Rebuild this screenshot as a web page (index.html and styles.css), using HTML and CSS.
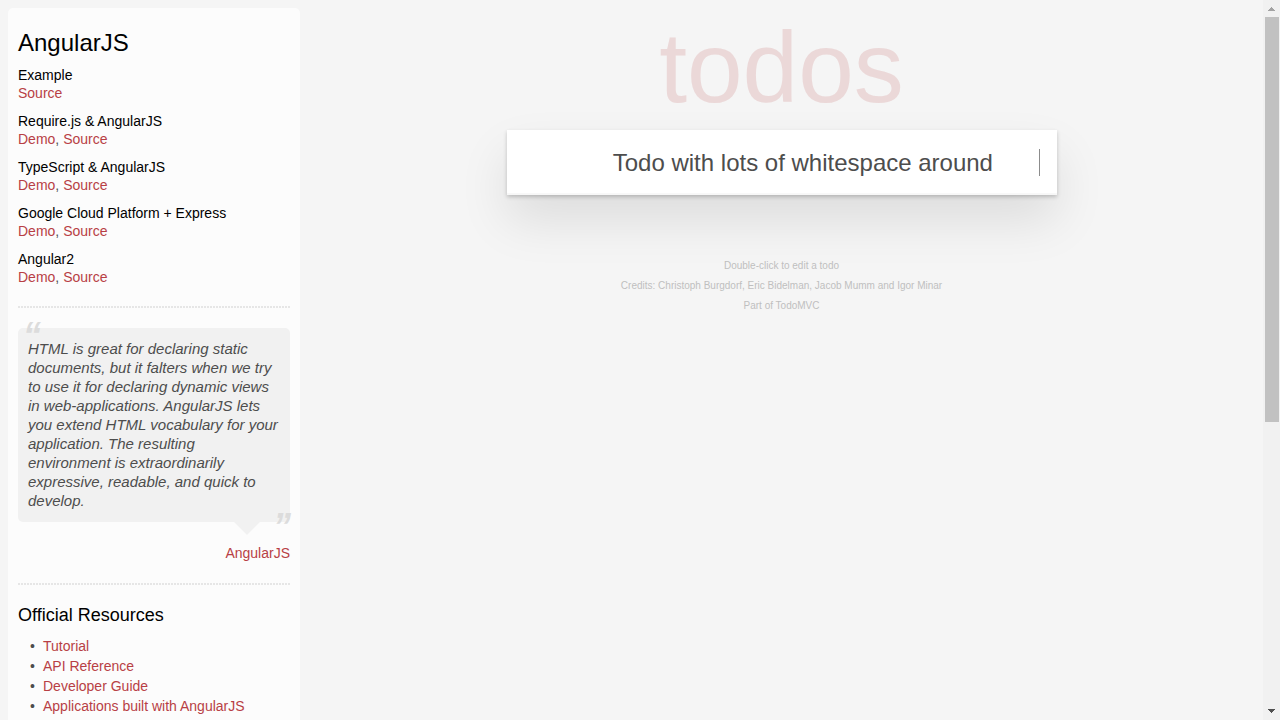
FILE: index.html
```html
<!DOCTYPE html>
<html lang="en">
<head>
<meta charset="utf-8">
<title>AngularJS • TodoMVC</title>
<link rel="stylesheet" href="styles.css">
</head>
<body>
<div class="page">
  <aside class="learn">
    <h3 class="learn-title">AngularJS</h3>
    <section class="source-links">
      <h5>Example</h5>
      <p><a href="#">Source</a></p>
    </section>
    <section class="source-links">
      <h5>Require.js &amp; AngularJS</h5>
      <p><a href="#">Demo</a>, <a href="#">Source</a></p>
    </section>
    <section class="source-links">
      <h5>TypeScript &amp; AngularJS</h5>
      <p><a href="#">Demo</a>, <a href="#">Source</a></p>
    </section>
    <section class="source-links">
      <h5>Google Cloud Platform + Express</h5>
      <p><a href="#">Demo</a>, <a href="#">Source</a></p>
    </section>
    <section class="source-links">
      <h5>Angular2</h5>
      <p><a href="#">Demo</a>, <a href="#">Source</a></p>
    </section>
    <hr>
    <blockquote class="quote">
      <p class="speech-bubble">HTML is great for declaring static documents, but it falters when we try to use it for declaring dynamic views in web-applications. AngularJS lets you extend HTML vocabulary for your application. The resulting environment is extraordinarily expressive, readable, and quick to develop.</p>
      <footer><a href="#">AngularJS</a></footer>
    </blockquote>
    <hr>
    <h4>Official Resources</h4>
    <ul>
      <li><a href="#">Tutorial</a></li>
      <li><a href="#">API Reference</a></li>
      <li><a href="#">Developer Guide</a></li>
      <li><a href="#">Applications built with AngularJS</a></li>
    </ul>
  </aside>
  <main class="content">
    <h1>todos</h1>
    <form class="todo-form">
      <input class="new-todo" type="text" aria-label="What needs to be done?" value="       Todo with lots of whitespace around       ">
      <span class="caret"></span>
    </form>
    <footer class="info">
      <p>Double-click to edit a todo</p>
      <p>Credits: <a href="#">Christoph Burgdorf</a>, <a href="#">Eric Bidelman</a>, <a href="#">Jacob Mumm</a> and <a href="#">Igor Minar</a></p>
      <p>Part of <a href="#">TodoMVC</a></p>
    </footer>
  </main>
  <div class="scrollbar" aria-hidden="true">
    <svg viewBox="0 0 17 17" shape-rendering="crispEdges"><path fill="#a3a3a3" d="M8 7h1v1h1v1h1v1h1v1H5v-1h1V9h1V8h1z"/></svg>
    <div class="track"><div class="thumb"></div></div>
    <svg viewBox="0 0 17 17" shape-rendering="crispEdges"><path fill="#505050" d="M5 6h7v1h-1v1h-1v1H9v1H8V9H7V8H6V7H5z"/></svg>
  </div>
</div>
</body>
</html>
```

FILE: styles.css
```css
* { box-sizing: border-box; }

body {
  margin: 0;
  background: #f5f5f5;
  color: #4d4d4d;
  font: 14px/20px "Liberation Sans", Arial, sans-serif;
}

h1, h3, h4, h5, p, ul, blockquote { margin: 0; padding: 0; font-weight: 400; }

a { color: #b83f45; text-decoration: none; }

.page {
  display: flex;
  height: 100vh;
  overflow: hidden;
}

.learn {
  flex: none;
  width: 292px;
  min-height: 100%;
  margin: 8px 0 0 8px;
  padding: 20px 10px 10px;
  border-radius: 5px 5px 0 0;
  background: #fcfcfc;
}

.learn h3, .learn h4, .learn h5 { color: #000; }
.learn-title { margin-bottom: 8px; font-size: 24px; line-height: 30px; }

.source-links { margin-bottom: 10px; line-height: 18px; }
.source-links h5 { font-size: 14px; }

.learn hr {
  height: 2px;
  margin: 20px 0;
  border: 0;
  background: repeating-linear-gradient(90deg, #e6e6e6 0 2px, transparent 2px 3px);
}

.quote { position: relative; }

.speech-bubble {
  position: relative;
  padding: 11px 10px 12px;
  border-radius: 5px;
  background: #f1f1f1;
  font-size: 15px;
  font-style: italic;
  line-height: 19px;
}

.speech-bubble::before, .quote::after {
  position: absolute;
  color: #dcdcdc;
  font: italic 700 36px/36px "Liberation Sans", Arial, sans-serif;
}
.speech-bubble::before { content: "“"; top: -10px; left: 5px; }
.quote::after { content: "”"; right: -1px; top: 181px; }

.speech-bubble::after {
  content: "";
  position: absolute;
  top: 100%;
  right: 30px;
  border: 13px solid transparent;
  border-top-color: #f1f1f1;
  border-bottom: 0;
}

.quote footer { padding-top: 21px; text-align: right; }

.learn h4 { margin: -2px 0 9px; font-size: 18px; line-height: 24px; }
.learn ul { padding-left: 12px; list-style: none; }
.learn li::before { content: "•"; display: inline-block; width: 13px; }

.content {
  flex: 1;
  min-width: 0;
  padding-top: 10px;
}

.content h1 {
  margin-bottom: 6px;
  color: #ebd8d8;
  font-size: 100px;
  line-height: 114px;
  text-align: center;
}

.todo-form {
  position: relative;
  max-width: 550px;
  margin: 0 auto 61px;
  box-shadow: 0 2px 4px rgba(0, 0, 0, 0.2), 0 25px 50px rgba(0, 0, 0, 0.1);
}

.new-todo {
  display: block;
  width: 100%;
  height: 65px;
  padding: 16px 16px 16px 60px;
  border: 0;
  outline: 0;
  background: #fff;
  box-shadow: inset 0 -2px 1px rgba(0, 0, 0, 0.03);
  color: #4d4d4d;
  font: 24px "Liberation Sans", Arial, sans-serif;
}

.caret {
  position: absolute;
  top: 19px;
  right: 17px;
  width: 1px;
  height: 27px;
  background: #8c8c8c;
}

.info {
  color: #bfbfbf;
  font-size: 10px;
  text-align: center;
}
.info a { color: inherit; }

.scrollbar {
  display: flex;
  flex-direction: column;
  flex: none;
  width: 17px;
  background: #f1f1f1;
}
.scrollbar svg { display: block; flex: none; width: 17px; height: 17px; }
.track { flex: 1; padding: 0 1px 0 2px; }
.thumb { height: 59%; background: #c1c1c1; }
```
